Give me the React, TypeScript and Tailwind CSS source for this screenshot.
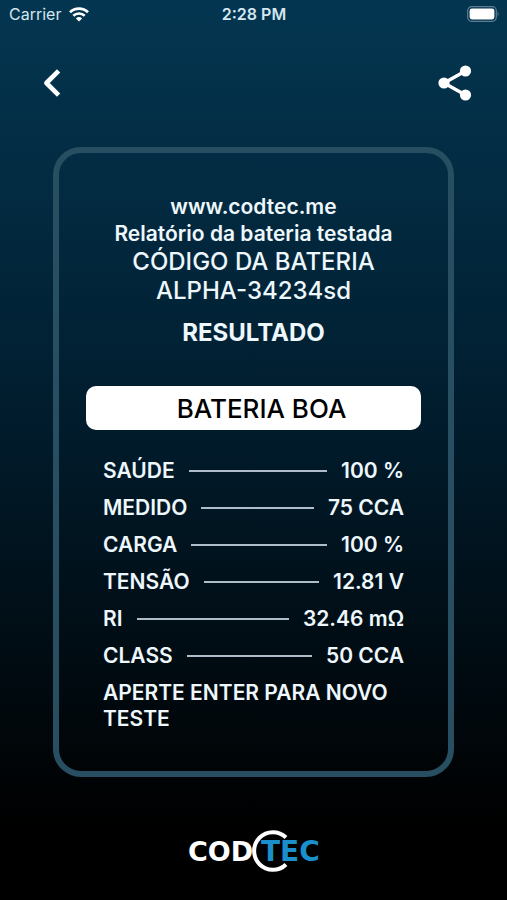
import React from "react";

const readings = [
  { label: "SAÚDE", value: "100 %" },
  { label: "MEDIDO", value: "75 CCA" },
  { label: "CARGA", value: "100 %" },
  { label: "TENSÃO", value: "12.81 V" },
  { label: "RI", value: "32.46 mΩ" },
  { label: "CLASS", value: "50 CCA" },
];

function StatusBar() {
  return (
    <div className="grid h-7 grid-cols-3 items-center pr-2 pl-[9px] text-base text-[#d3e6f1]">
      <div className="flex items-center gap-2">
        <span>Carrier</span>
        <svg width="20" height="15" viewBox="0 0 20 15" fill="none" stroke="#fff" aria-label="Wi-Fi">
          <path d="M1 5.2a13.2 13.2 0 0 1 18 0" strokeWidth="2.8" />
          <path d="M4.3 8.7a8.4 8.4 0 0 1 11.4 0" strokeWidth="2.6" />
          <path d="M10 14.6 6.9 11.5a4.6 4.6 0 0 1 6.2 0Z" fill="#fff" stroke="none" />
        </svg>
      </div>
      <span className="text-center font-semibold">2:28 PM</span>
      <svg className="justify-self-end" width="32" height="16" viewBox="0 0 32 16" aria-label="Bateria">
        <rect x="0.7" y="0.7" width="28.6" height="14.6" rx="4" fill="none" stroke="#5d7e92" strokeWidth="1.2" />
        <rect x="2.6" y="2.6" width="24.8" height="10.8" rx="2.4" fill="#fff" />
        <path d="M30.6 5.6c1.2.6 1.2 4.2 0 4.8Z" fill="#5d7e92" />
      </svg>
    </div>
  );
}

function Header() {
  return (
    <header className="flex items-center justify-between px-[30px] pt-[33px]">
      <button type="button" aria-label="Voltar" className="flex size-11 items-center justify-center">
        <svg width="18" height="28" viewBox="0 0 18 28" fill="none" stroke="#fff" strokeWidth="4.6" strokeLinejoin="round">
          <path d="M15.6 1.8 3.4 14l12.2 12.2" />
        </svg>
      </button>
      <button type="button" aria-label="Compartilhar" className="flex size-11 items-center justify-center">
        <svg width="34" height="36" viewBox="0 0 34 36" fill="#fff">
          <path d="M27.5 6 6 18l21.5 12" fill="none" stroke="#fff" strokeWidth="3.4" />
          <circle cx="27.5" cy="6" r="5.6" />
          <circle cx="6" cy="18" r="5.6" />
          <circle cx="27.5" cy="30" r="5.6" />
        </svg>
      </button>
    </header>
  );
}

function Logo() {
  return (
    <svg width="132" height="42" viewBox="0 0 132 42" role="img" aria-label="CODTEC">
      <path d="M98 7.5A18.800 18.800 0 1 0 98 34.500" fill="none" stroke="#fff" strokeWidth="4" />
      <text x="0" y="31" fontFamily="'DejaVu Sans', sans-serif" fontWeight="700" fontSize="27" fill="#fff">COD</text>
      <text x="73" y="31" fontFamily="'DejaVu Sans', sans-serif" fontWeight="700" fontSize="28" fill="#1b8fcb">TEC</text>
    </svg>
  );
}

export default function App() {
  return (
    <div className="flex min-h-screen flex-col bg-linear-to-b/srgb from-[#043651] via-[#011f31] via-42% to-black to-92% font-['Inter',sans-serif] text-[#edf7fc]">
      <StatusBar />
      <Header />
      <main className="mx-[53px] mt-[42px] rounded-[28px] border-6 border-[#284f61] px-[27px] pt-10 pb-[39px] font-medium">
        <div className="text-center">
          <p className="text-[21px] leading-[27px] font-semibold">www.codtec.me</p>
          <p className="text-[21px] leading-[27px] font-semibold">Relatório da bateria testada</p>
          <p className="text-2xl leading-[29px]">CÓDIGO DA BATERIA</p>
          <p className="text-2xl leading-[29px]">ALPHA-34234sd</p>
          <h1 className="mt-[13px] text-2xl leading-[29px] font-bold">RESULTADO</h1>
        </div>
        <div className="mt-[39px] flex h-11 items-center justify-center rounded-[10px] bg-white pl-4 text-[26px] text-black">
          BATERIA BOA
        </div>
        <div className="mt-7 flex flex-col gap-[11px] px-[17px] text-[21px] leading-[26px] font-semibold">
          <dl className="flex flex-col gap-[11px]">
            {readings.map((reading) => (
              <div key={reading.label} className="flex items-center gap-[14px]">
                <dt>{reading.label}</dt>
                <div aria-hidden="true" className="h-[2px] flex-1 bg-[#aebdc9]" />
                <dd>{reading.value}</dd>
              </div>
            ))}
          </dl>
          <p>APERTE ENTER PARA NOVO TESTE</p>
        </div>
      </main>
      <footer className="flex justify-center pt-[53px] pb-6">
        <Logo />
      </footer>
    </div>
  );
}
